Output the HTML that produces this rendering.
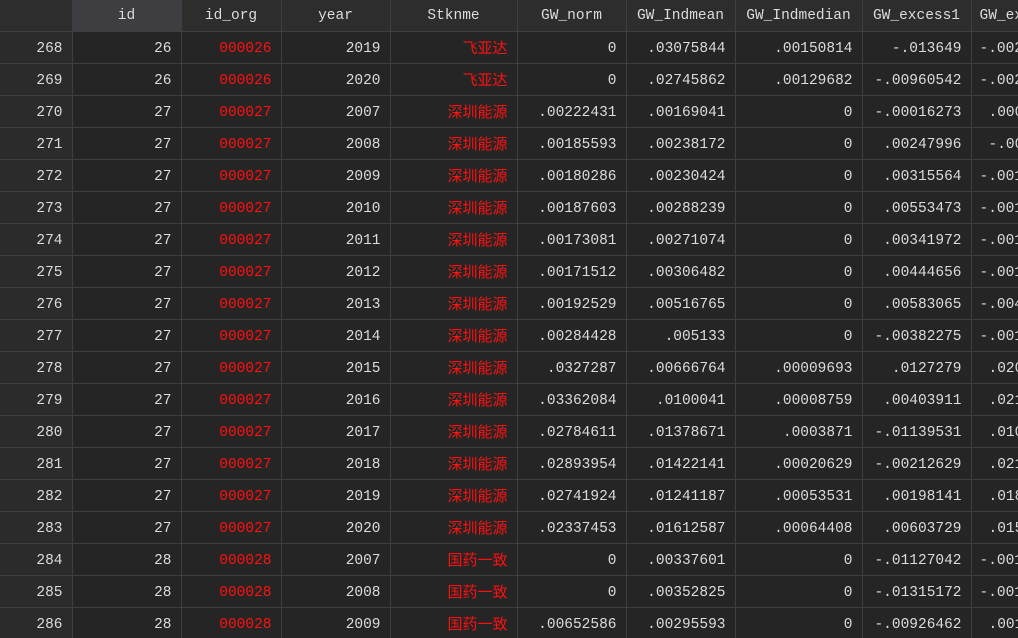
<!DOCTYPE html>
<html><head><meta charset="utf-8"><style>
html,body{margin:0;padding:0;background:#252525;width:1018px;height:638px;overflow:hidden}
table{border-collapse:collapse;table-layout:fixed;width:1080px;font-family:"Liberation Mono","Noto Sans CJK SC",monospace;font-size:14.5px;color:#dcdcdc}
td,th{border:1px solid #3f3f3f;height:29px;padding:2px 9px 0 0;text-align:right;white-space:nowrap;overflow:hidden;box-sizing:content-box;line-height:16px;vertical-align:middle}
th{background:#2d2d2d;font-weight:normal;text-align:center;padding:0;height:31px;border-top:none}
th.sel{background:#3e3e42}
td.rh{background:#2b2b2b}
th:first-child,td.rh{border-left:none}
.r{color:#ff1010}
.c{font-family:"Liberation Sans","Noto Sans CJK SC",sans-serif;font-size:15px;line-height:16px}
.c span{position:relative;top:0px}
.l{text-align:left;padding-left:8px}
.l2{text-align:left;padding-left:17px}
</style></head><body>
<table>
<colgroup><col style="width:72px"><col style="width:109px"><col style="width:100px"><col style="width:109px"><col style="width:127px"><col style="width:109px"><col style="width:109px"><col style="width:127px"><col style="width:109px"><col style="width:109px"></colgroup>
<tr><th></th><th class="sel">id</th><th>id_org</th><th>year</th><th>Stknme</th><th>GW_norm</th><th>GW_Indmean</th><th>GW_Indmedian</th><th>GW_excess1</th><th class="l">GW_excess2</th></tr>
<tr><td class="rh">268</td><td>26</td><td class="r">000026</td><td>2019</td><td class="r c"><span>飞亚达</span></td><td>0</td><td>.03075844</td><td>.00150814</td><td>-.013649</td><td class="l">-.0021534</td></tr>
<tr><td class="rh">269</td><td>26</td><td class="r">000026</td><td>2020</td><td class="r c"><span>飞亚达</span></td><td>0</td><td>.02745862</td><td>.00129682</td><td>-.00960542</td><td class="l">-.0021534</td></tr>
<tr><td class="rh">270</td><td>27</td><td class="r">000027</td><td>2007</td><td class="r c"><span>深圳能源</span></td><td>.00222431</td><td>.00169041</td><td>0</td><td>-.00016273</td><td class="l2">.0006283</td></tr>
<tr><td class="rh">271</td><td>27</td><td class="r">000027</td><td>2008</td><td class="r c"><span>深圳能源</span></td><td>.00185593</td><td>.00238172</td><td>0</td><td>.00247996</td><td class="l2">-.000526</td></tr>
<tr><td class="rh">272</td><td>27</td><td class="r">000027</td><td>2009</td><td class="r c"><span>深圳能源</span></td><td>.00180286</td><td>.00230424</td><td>0</td><td>.00315564</td><td class="l">-.0011526</td></tr>
<tr><td class="rh">273</td><td>27</td><td class="r">000027</td><td>2010</td><td class="r c"><span>深圳能源</span></td><td>.00187603</td><td>.00288239</td><td>0</td><td>.00553473</td><td class="l">-.0011526</td></tr>
<tr><td class="rh">274</td><td>27</td><td class="r">000027</td><td>2011</td><td class="r c"><span>深圳能源</span></td><td>.00173081</td><td>.00271074</td><td>0</td><td>.00341972</td><td class="l">-.0011526</td></tr>
<tr><td class="rh">275</td><td>27</td><td class="r">000027</td><td>2012</td><td class="r c"><span>深圳能源</span></td><td>.00171512</td><td>.00306482</td><td>0</td><td>.00444656</td><td class="l">-.0013526</td></tr>
<tr><td class="rh">276</td><td>27</td><td class="r">000027</td><td>2013</td><td class="r c"><span>深圳能源</span></td><td>.00192529</td><td>.00516765</td><td>0</td><td>.00583065</td><td class="l">-.0041526</td></tr>
<tr><td class="rh">277</td><td>27</td><td class="r">000027</td><td>2014</td><td class="r c"><span>深圳能源</span></td><td>.00284428</td><td>.005133</td><td>0</td><td>-.00382275</td><td class="l">-.0011526</td></tr>
<tr><td class="rh">278</td><td>27</td><td class="r">000027</td><td>2015</td><td class="r c"><span>深圳能源</span></td><td>.0327287</td><td>.00666764</td><td>.00009693</td><td>.0127279</td><td class="l2">.0206283</td></tr>
<tr><td class="rh">279</td><td>27</td><td class="r">000027</td><td>2016</td><td class="r c"><span>深圳能源</span></td><td>.03362084</td><td>.0100041</td><td>.00008759</td><td>.00403911</td><td class="l2">.0216283</td></tr>
<tr><td class="rh">280</td><td>27</td><td class="r">000027</td><td>2017</td><td class="r c"><span>深圳能源</span></td><td>.02784611</td><td>.01378671</td><td>.0003871</td><td>-.01139531</td><td class="l2">.0106283</td></tr>
<tr><td class="rh">281</td><td>27</td><td class="r">000027</td><td>2018</td><td class="r c"><span>深圳能源</span></td><td>.02893954</td><td>.01422141</td><td>.00020629</td><td>-.00212629</td><td class="l2">.0216283</td></tr>
<tr><td class="rh">282</td><td>27</td><td class="r">000027</td><td>2019</td><td class="r c"><span>深圳能源</span></td><td>.02741924</td><td>.01241187</td><td>.00053531</td><td>.00198141</td><td class="l2">.0186283</td></tr>
<tr><td class="rh">283</td><td>27</td><td class="r">000027</td><td>2020</td><td class="r c"><span>深圳能源</span></td><td>.02337453</td><td>.01612587</td><td>.00064408</td><td>.00603729</td><td class="l2">.0156283</td></tr>
<tr><td class="rh">284</td><td>28</td><td class="r">000028</td><td>2007</td><td class="r c"><span>国药一致</span></td><td>0</td><td>.00337601</td><td>0</td><td>-.01127042</td><td class="l">-.0011526</td></tr>
<tr><td class="rh">285</td><td>28</td><td class="r">000028</td><td>2008</td><td class="r c"><span>国药一致</span></td><td>0</td><td>.00352825</td><td>0</td><td>-.01315172</td><td class="l">-.0011526</td></tr>
<tr><td class="rh">286</td><td>28</td><td class="r">000028</td><td>2009</td><td class="r c"><span>国药一致</span></td><td>.00652586</td><td>.00295593</td><td>0</td><td>-.00926462</td><td class="l2">.0011526</td></tr>
</table>
</body></html>
